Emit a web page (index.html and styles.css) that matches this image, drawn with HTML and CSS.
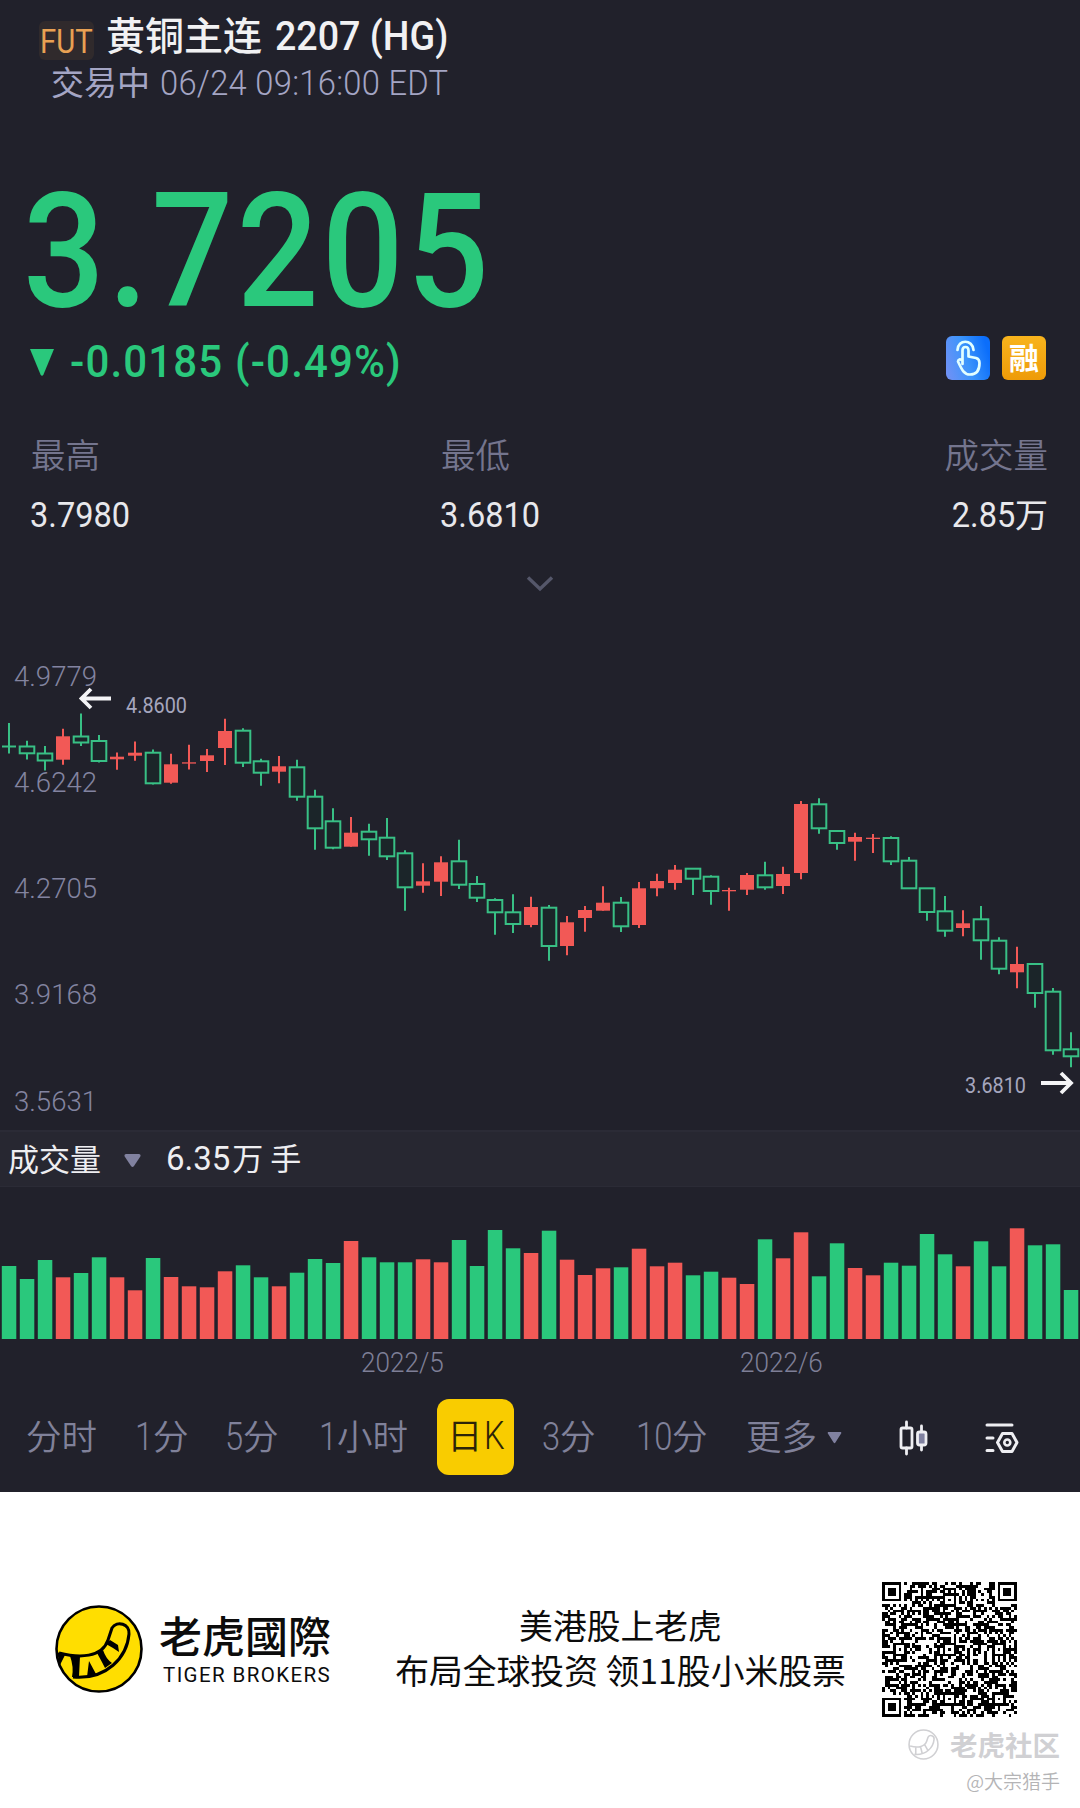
FILE: index.html
```html
<!DOCTYPE html>
<html lang="zh-CN">
<head>
<meta charset="utf-8">
<title>黄铜主连 2207 (HG)</title>
<link rel="stylesheet" href="styles.css">
</head>
<body>
<main class="quote">
  <header class="head">
    <div class="title-row">
      <span class="badge"><span class="din">FUT</span></span>
      <h1 class="name">黄铜主连</h1>
      <span class="code din">2207 (HG)</span>
    </div>
    <div class="status-row"><span class="status">交易中</span><span class="time din">06/24 09:16:00 EDT</span></div>
  </header>

  <section class="price-block">
    <div class="price"><span class="din">3.7205</span></div>
    <div class="change-row">
      <svg class="down" width="24" height="27" viewBox="0 0 24 27"><path d="M0 0H24L13.5 25.5Q12 28 10.5 25.5Z"/></svg>
      <span class="change din">-0.0185 (-0.49%)</span>
      <span class="tags">
        <svg width="44" height="44" viewBox="0 0 44 44">
          <defs><linearGradient id="blue" x1="0" y1=".8" x2="1" y2=".5"><stop offset="0" stop-color="#6f91f5"/><stop offset=".5" stop-color="#3c95fb"/><stop offset="1" stop-color="#0b6efb"/></linearGradient></defs>
          <rect width="44" height="44" rx="6" fill="url(#blue)"/>
          <g fill="none" stroke="#e2ffff" stroke-width="2.700" stroke-linecap="round" stroke-linejoin="round">
            <path d="M11.500 14C12 3 26.500 3 27.500 14"/>
            <path d="M16.500 28V14.500Q16.500 11 19.500 11T22.500 14.500V20.500L30 22Q33.500 23 33.500 27C33.500 35 30 38.500 24 38.500C18 38.500 16 34 12 25.500Q12.500 22 16.500 24.500"/>
          </g>
        </svg>
        <span class="tag-margin">融</span>
      </span>
    </div>
  </section>

  <section class="stats">
    <div class="stat"><span class="label">最高</span><span class="value"><span class="din">3.7980</span></span></div>
    <div class="stat low"><span class="label">最低</span><span class="value"><span class="din">3.6810</span></span></div>
    <div class="stat right"><span class="label">成交量</span><span class="value"><span class="din">2.85</span>万</span></div>
  </section>
  <div class="expand"><svg width="28" height="16" viewBox="0 0 28 16"><path d="M2 1.500L14 13L26 1.500" fill="none" stroke="#55576a" stroke-width="3.400"/></svg></div>

  <section class="chart">
    <svg id="candles" width="1080" height="482" viewBox="0 648 1080 482"></svg>
  </section>

  <div class="vol-head">
    <span>成交量</span>
    <svg width="17" height="13" viewBox="0 0 17 13"><path d="M2 0H15Q17.500 .5 16 3L10 12Q8.500 14 7 12L1 3Q-.5 .5 2 0Z"/></svg>
    <span class="vol-value"><span class="din">6.35</span>万 手</span>
  </div>
  <svg id="volume" class="volume" width="1080" height="152" viewBox="0 1187 1080 152"></svg>
  <div class="dates"><span class="din">2022/5</span><span class="din">2022/6</span></div>

  <nav class="tabs">
    <span class="t1">分时</span>
    <span class="t2"><b class="din">1</b>分</span>
    <span class="t3"><b class="din">5</b>分</span>
    <span class="t4"><b class="din">1</b>小时</span>
    <span class="t5 active">日<b class="din">K</b></span>
    <span class="t6"><b class="din">3</b>分</span>
    <span class="t7"><b class="din">10</b>分</span>
    <span class="t8">更多</span>
    <svg class="t9" width="15" height="12" viewBox="0 0 16 13"><path d="M1 0H15Q16 1 15 2L9 11.500Q8 13 7 11.500L1 2Q0 1 1 0Z" fill="#8081a0"/></svg>
    <svg class="t10" width="30" height="36" viewBox="0 0 30 36" fill="none" stroke="#eeeef2" stroke-width="2.800" stroke-linecap="round">
      <path d="M7.500 2V8M7.500 28V34M22.500 6V12M22.500 25V30"/><rect x="2" y="8" width="11" height="20" rx="1.500"/><rect x="18.500" y="12" width="8.500" height="13" rx="2" fill="#8081a0"/>
    </svg>
    <svg class="t11" width="34" height="32" viewBox="0 0 34 32" fill="none" stroke="#eeeef2" stroke-width="3" stroke-linecap="round" stroke-linejoin="round">
      <path d="M2 3H27M2 16H8M2 28.500H8M17.500 11.500H27L32 20.500L27 29.500H17.500L12.500 20.500Z"/><circle cx="22.300" cy="20.500" r="3" stroke-width="2.600"/>
    </svg>
  </nav>
</main>

<footer class="promo">
  <svg class="logo" width="88" height="88" viewBox="-44 -44 88 88">
    <circle r="42.500" fill="#ffde00" stroke="#000" stroke-width="2.600"/>
    <path d="M-40 4C-20 9 3 9 9-9L13-21C18-29 31-25 30-15C28 8 8 31-26 28" fill="none" stroke="#000" stroke-width="3"/>
    <path d="M-42 3L-34 6L-39 16ZM-29 7L-19 7L-20 28L-27 28Q-25 18-29 7ZM-10 12L-3 25L-12 28ZM-2 4L4 1Q7 10 13 14L6 19Q3 13-2 4ZM7-5L11-9L19-4L20 3L14-1Z"/>
  </svg>
  <div class="brand"><span class="brand-cn">老虎國際</span><span class="brand-en">TIGER BROKERS</span></div>
  <div class="slogan"><span>美港股上老虎</span><span>布局全球投资 领11股小米股票</span></div>
  <svg id="qr" class="qr" width="135" height="135" viewBox="0 0 49 49" shape-rendering="crispEdges"></svg>
  <div class="watermark">
    <div class="wm-main"><svg width="31" height="31" viewBox="-44 -44 88 88" fill="none" stroke="#d0d0d3" stroke-width="4.500"><circle r="41"/><path d="M-38 4C-20 9 3 9 9-9L13-21C18-29 31-25 30-15C28 8 8 31-26 28M-22 8V26M-8 8L-4 24M4 2L12 16"/></svg><span>老虎社区</span></div>
    <div class="wm-user">@大宗猎手</div>
  </div>
</footer>
<script src="chart.js"></script>
</body>
</html>
```
FILE: styles.css
```css
* { box-sizing: border-box; }
body { margin: 0; width: 1080px; height: 1808px; background: #fff; font-family: "Noto Sans CJK SC", sans-serif; overflow: hidden; }
.din { font-family: Roboto, "Liberation Sans", sans-serif; display: inline-block; transform-origin: 0 50%; white-space: pre; font-weight: 400; }
.quote { background: #21212b; height: 1492px; display: flex; flex-direction: column; }

.head { height: 170px; flex: none; }
.title-row { display: flex; align-items: flex-start; height: 60px; padding: 8px 0 0 39px; color: #f1f1f3; }
.badge { width: 55px; height: 39px; margin-top: 13px; border-radius: 6px; background: #302a2c; color: #e9a153; font-size: 33px; line-height: 41px; padding-left: 1px; }
.badge .din { transform: scaleX(.89); display: block; }
.name { margin: 0 0 0 12px; font-size: 39px; line-height: 50px; font-weight: 500; width: 168px; }
.code { font-size: 40px; line-height: 50px; font-weight: 500; transform: scaleX(.94); margin: 4px 0 0 1px; }
.status-row { display: flex; padding-left: 51px; height: 42px; line-height: 42px; color: #a4a5c4; font-size: 33px; }
.status { width: 109px; }
.time { font-size: 35px; font-weight: 300; margin-top: 3px; transform: scaleX(.935); letter-spacing: .3px; }

.price-block { height: 240px; flex: none; color: #2ac87c; }
.price { height: 160px; font-size: 160px; padding-left: 23px; }
.price .din { font-weight: 500; line-height: 164px; display: block; width: 500px; transform: scaleX(.9); letter-spacing: 3.700px; }
.change-row { display: flex; align-items: center; height: 64px; padding: 0 34px 0 30px; }
.down { fill: #2ac87c; flex: none; }
.change { font-size: 44px; font-weight: 500; margin-left: 16px; transform: scaleX(.955); letter-spacing: 1.200px; }
.tags { margin: -8px 0 0 auto; display: flex; gap: 12px; }
.tag-margin { width: 44px; height: 44px; border-radius: 6px; background: linear-gradient(#f8b41d, #ee9b08); color: #fff; font-size: 30px; line-height: 41px; font-weight: 700; text-align: center; }

.stats { display: grid; grid-template-columns: 410px 1fr 1fr; height: 140px; flex: none; padding: 22px 32px 0 31px; }
.stat { display: flex; flex-direction: column; }
.stat.right { align-items: flex-end; }
.label { font-size: 34.500px; line-height: 42px; color: #74758e; font-weight: 350; }
.value { font-size: 33px; line-height: 44px; margin-top: 17px; margin-left: -1px; color: #e8e8ec; }
.value .din { font-size: 35px; font-weight: 400; transform: scaleX(.93); }
.right .din { transform-origin: 100% 50%; }
.expand { height: 98px; flex: none; display: flex; justify-content: center; padding-top: 26px; }

.chart, .chart svg { display: block; height: 482px; flex: none; }
.axis { font: 300 27.500px Roboto, sans-serif; fill: #8384a0; }
.mark { font: 400 22px Roboto, sans-serif; fill: #a5a6be; }
.vol-head { height: 57px; flex: none; background: #272731; border-top: 2px solid #2b2b36; border-bottom: 1px solid #2b2b36; display: flex; align-items: center; padding: 0 0 3px 8px; font-size: 31px; line-height: 50px; color: #eeeef1; }
.vol-head svg { margin: 6px 25px 0 23px; fill: #8182a0; }
.vol-value .din { font-size: 34px; transform: scaleX(.97); }
.volume { display: block; flex: none; }
.dates { display: flex; height: 48px; flex: none; padding: 8px 0 0 361px; color: #7e7f97; font-size: 27.500px; line-height: 32px; }
.dates .din { flex: 0 0 379px; font-weight: 300; transform: scaleX(.95); }
.dates .din + .din { flex-basis: 100px; }

.tabs { display: flex; align-items: center; height: 98px; font-size: 35.500px; line-height: 70px; color: #80819a; font-weight: 350; padding-left: 26px; white-space: nowrap; }
.tabs > * { flex: none; }
.tabs .din { width: 18px; font-size: 38px; font-weight: 300; line-height: 66px; transform: scaleX(.86); }
.t1 { width: 109px; } .t2 { width: 90px; } .t3 { width: 94px; } .t4 { width: 118px; }
.t1, .t2, .t3, .t4, .t6, .t7, .t8 { padding-bottom: 2px; }
.t5.active { width: 77px; height: 76px; margin-top: 2px; border-radius: 12px; background: #f9cc00; color: #2c2408; padding-left: 10px; }
.t5.active .din { margin-left: 1px; }
.t6 { margin-left: 28px; width: 94px; } .t7 { width: 110px; } .t8 { width: 81px; }
.tabs .t7 .din { width: 36px; }
.t9 { margin-top: 3px; }
.t10 { margin: 3px 0 0 57px; } .t11 { margin: 3px 0 0 56px; }

.promo { height: 316px; position: relative; display: flex; align-items: flex-start; color: #0c0c0c; }
.logo { margin: 113px 0 0 55px; flex: none; }
.brand { display: flex; flex-direction: column; margin: 117px 0 0 16px; width: 192px; flex: none; }
.brand-cn { font-size: 43px; line-height: 50px; font-weight: 500; font-family: "Noto Sans CJK TC", sans-serif; }
.brand-en { font: 400 20.500px/32px Roboto, sans-serif; letter-spacing: 1.400px; margin-left: 4px; }
.slogan { display: flex; flex-direction: column; align-items: center; width: 539px; font-size: 33.800px; line-height: 45px; margin: 110px 0 0; flex: none; white-space: nowrap; }
.qr { position: absolute; left: 882px; top: 90px; }
.watermark { position: absolute; right: 20px; top: 231px; color: #d0d0d3; text-align: right; }
.wm-main { display: flex; align-items: center; gap: 11px; font-size: 27.500px; font-weight: 700; line-height: 42px; }
.wm-user { font-size: 19px; line-height: 32px; color: #b4b4b6; font-weight: 350; }
```
FILE: chart.js
```js
const GREEN = '#2ac87c', RED = '#f25956', STEP = 18;

// direction, high, body top, body bottom, low
const candles = [
  ['g',723,746.5,746.5,753.5],['g',740.7,746.5,753.3,759.5],['g',746,753.5,760.5,770.5],['r',728.7,736.3,759.7,764.7],
  ['g',713.5,736.5,742.5,746],['g',735,741,761,762.5],['r',752.5,756.7,759.3,769.7],['r',741.5,752.7,755.7,760.7],
  ['g',749.5,752.7,783.3,784.5],['r',753.7,764.3,782.7,783.7],['r',744.7,762.3,763.3,769.5],['r',749,755.3,761,772],
  ['r',718.7,731,748,765],['g',728.3,730.7,762.7,767],['g',758.7,761.3,772.7,785.7],['r',756,766.3,771.7,783.3],
  ['g',759.7,767.3,796.7,800.7],['g',789.7,796.7,828.3,849.7],['g',808.3,821.3,847.7,849.3],['r',817,832.7,846.7,846.7],
  ['g',823.7,831.7,839.3,855.7],['g',818,837.7,856.3,860],['g',850.3,853.3,887.3,910.7],['r',863.3,881.3,885.7,892.7],
  ['r',856.3,862.3,881.7,896],['g',839.7,861.3,884.7,889],['g',876,884,897.7,902],['g',898.3,900,912.3,934.7],
  ['g',894.3,912.3,924,933],['r',896.7,907,925,927.3],['g',905,907.7,946,960.7],['r',916,922.3,946,955.3],
  ['r',906,910,918,931.7],['r',886.3,902.7,910.7,910.7],['g',897,902.7,926.3,932],['r',882,888.3,925,928],
  ['r',873.7,881,888.3,896.3],['r',865,869.7,883,889.7],['g',868.7,868.7,878.7,895],['g',875.3,876.7,891,904.7],
  ['r',887.7,890,891,910.7],['r',873,875,889.7,895],['g',861.7,875.3,887.3,889.7],['r',866.7,874,886,894],
  ['r',801,804,873,879.3],['g',798.3,804.3,828.3,833.7],['g',830,831,843,849.7],['r',832.7,837,841.7,860.7],
  ['r',834,837.7,838.7,853],['g',836.3,838,861.3,865],['g',857,860.7,888.3,888.3],['g',888.3,888.3,912,920.7],
  ['g',896,911.3,930.7,936.7],['r',910.3,923.3,928,936.3],['g',906,919.3,940.3,959.7],['g',937.3,940.7,968.7,974.3],
  ['r',946.7,964,972.3,988.3],['g',963.5,964,993,1007.7],['g',988,991.7,1050.3,1054.7],['g',1032.3,1049.3,1056.3,1067.3]
];

// bar heights
const volumes = [73,60,79,61.7,66,81.7,61.7,48.7,81,62,52.7,51.7,67.7,73.7,61.7,52.7,66.3,80,76,98,81.7,76.7,76.7,79.7,76.7,99,73,109,90.7,86,
  108.3,79.3,64,70.7,71.7,90.3,72.7,76.3,63.7,67.3,61.3,55,99.7,80.7,106.7,62.7,95.7,71,63.7,76.3,73.3,105,84.7,72.7,97.7,72.7,110.7,93.7,94.7,49];

let out = '';
[['4.9779',686],['4.6242',792],['4.2705',898],['3.9168',1004],['3.5631',1110.5]].forEach(([t, y]) => {
  out += `<text class="axis" x="14" y="${y}" textLength="83" lengthAdjust="spacingAndGlyphs">${t}</text>`;
});
candles.forEach(([d, hi, top, bot, lo], i) => {
  const x = 9 + STEP * i;
  if (d === 'g') {
    out += `<g fill="none" stroke="#38c085" stroke-width="2"><path d="M${x} ${hi}V${top}M${x} ${bot}V${lo}"/>`;
    out += bot - top < 1 ? `<path d="M${x - 7} ${top}H${x + 7}"/></g>` : `<rect x="${x - 7.3}" y="${top}" width="14.600" height="${bot - top}" fill="#152a27" fill-opacity=".5"/></g>`;
  } else {
    out += `<path d="M${x} ${hi}V${lo}" stroke="${RED}" stroke-width="2"/><rect x="${x - 7}" y="${top}" width="14" height="${Math.max(1.3, bot - top)}" fill="${RED}"/>`;
  }
});
out += `<text class="mark" x="126" y="713" textLength="61" lengthAdjust="spacingAndGlyphs">4.8600</text>
<text class="mark" x="965" y="1093" textLength="61" lengthAdjust="spacingAndGlyphs">3.6810</text>
<path d="M111 698.500H82M91 689L81.500 698.500L91 708M1041 1083H1070M1061 1073L1071 1083L1061 1093" fill="none" stroke="#f4f4f6" stroke-width="3.800"/>`;
document.getElementById('candles').innerHTML = out;

document.getElementById('volume').innerHTML = volumes.map((h, i) =>
  `<rect x="${1.8 + STEP * i}" y="${1339 - h}" width="14.500" height="${h}" fill="${candles[i][0] === 'g' ? GREEN : RED}"/>`).join('');

// QR grid, 49 modules a side
const N = 49;
let seed = 20220624, d = '';
const rand = () => (seed = (seed * 1103515245 + 12345) % 2147483648) / 2147483648;
const ring = (x, y, cx, cy) => Math.max(Math.abs(x - cx), Math.abs(y - cy));
for (let y = 0; y < N; y++) for (let x = 0; x < N; x++) {
  let on = rand() < 0.54;
  if (x === 6 || y === 6) on = (x + y) % 2 === 0;
  for (const [cx, cy] of [[24,6],[6,24],[24,24],[42,24],[24,42],[42,42]]) {
    const r = ring(x, y, cx, cy);
    if (r <= 2) on = r !== 1;
  }
  for (const [cx, cy] of [[3,3],[45,3],[3,45]]) {
    const r = ring(x, y, cx, cy);
    if (r <= 4) on = r === 3 || r <= 1;
  }
  if (on) d += `M${x} ${y}h1v1h-1z`;
}
document.getElementById('qr').innerHTML = `<path d="${d}"/>`;
```
